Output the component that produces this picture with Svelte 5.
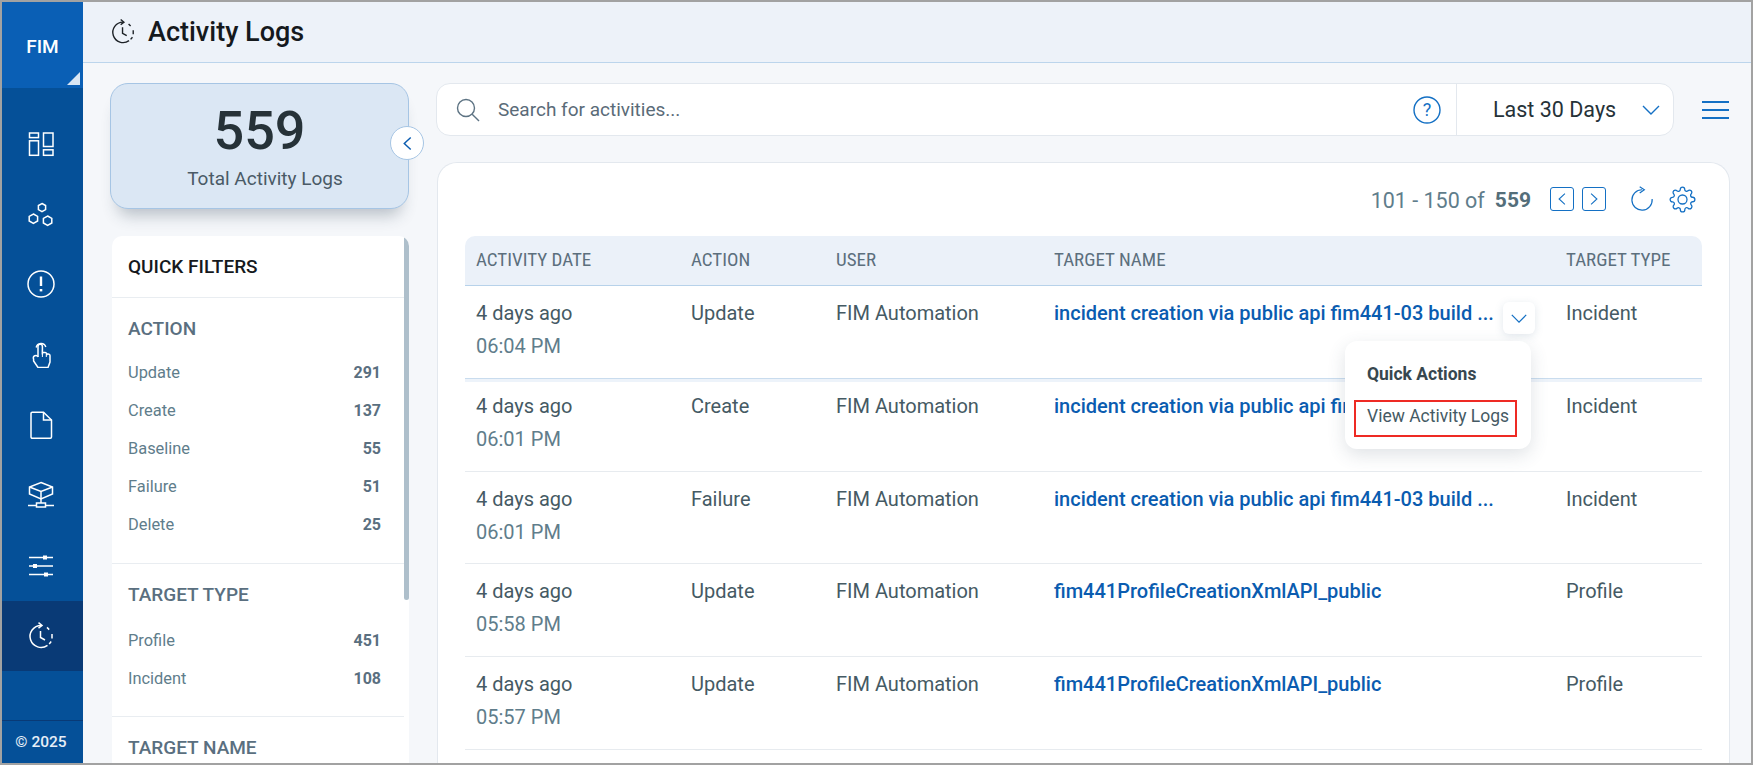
<script>
    const navIcons = ['dash', 'hex', 'alert', 'hand', 'file', 'net', 'sliders', 'clock'];

    const actionFilters = [
        { label: 'Update', count: 291 },
        { label: 'Create', count: 137 },
        { label: 'Baseline', count: 55 },
        { label: 'Failure', count: 51 },
        { label: 'Delete', count: 25 }
    ];
    const typeFilters = [
        { label: 'Profile', count: 451 },
        { label: 'Incident', count: 108 }
    ];

    const longName = 'incident creation via public api fim441-03 build ...';
    const rows = [
        { time: '06:04 PM', action: 'Update', name: longName, type: 'Incident' },
        { time: '06:01 PM', action: 'Create', name: longName, type: 'Incident' },
        { time: '06:01 PM', action: 'Failure', name: longName, type: 'Incident' },
        { time: '05:58 PM', action: 'Update', name: 'fim441ProfileCreationXmlAPI_public', type: 'Profile' },
        { time: '05:57 PM', action: 'Update', name: 'fim441ProfileCreationXmlAPI_public', type: 'Profile' }
    ];
</script>

{#snippet clockIcon()}
    <path d="M14 3.4A11 11 0 1 0 20.5 23.3" />
    <path d="M11.5 0.6L15 3.4L11.5 6.2" />
    <path d="M13.5 9V15.5L18 18" />
    <path d="M20 5.4l2.2 2.2M25 12v4.4M24.2 19.6l-2 2.4" />
{/snippet}

<div class="frame">
    <nav class="sidebar">
        <div class="brand">FIM<span class="corner"></span></div>
        <div class="nav-list">
            {#each navIcons as icon}
                <div class="nav-item" class:active={icon === 'clock'}>
                    <svg viewBox="0 0 28 28" width="28" height="28" fill="none" stroke="#fff" stroke-width="1.5">
                        {#if icon === 'dash'}
                            <rect x="2.5" y="4" width="9" height="4.6" />
                            <rect x="2.5" y="11.8" width="9" height="14.5" />
                            <rect x="16.5" y="4" width="9.5" height="13.5" />
                            <rect x="16.5" y="20.8" width="9.5" height="5.5" />
                        {:else if icon === 'hex'}
                            <polygon points="15,3.5 18.6,5.5 18.6,9.6 15,11.6 11.4,9.6 11.4,5.5" />
                            <polygon points="6.4,14 10.6,16.4 10.6,21 6.4,23.4 2.2,21 2.2,16.4" />
                            <polygon points="20.6,16 24.8,18.4 24.8,23 20.6,25.4 16.4,23 16.4,18.4" />
                        {:else if icon === 'alert'}
                            <circle cx="14" cy="14" r="13" />
                            <path d="M14 6.5V16" stroke-width="2.4" />
                            <path d="M14 19V21.4" stroke-width="2.6" />
                        {:else if icon === 'hand'}
                            <path d="M9.2 7.5a5 5 0 0 1 9.6 -.6" />
                            <path d="M11 17V6.5a2.2 2.2 0 0 1 4.4 0V14.5" />
                            <path d="M15.4 12.5h2.6a1.8 1.8 0 0 1 1.8 1.8v1M19.8 14h1.4a1.8 1.8 0 0 1 1.8 1.8V22l-2 5.5H11L6.6 21V19a2.2 2.2 0 0 1 4.4 -2" />
                            <path d="M15.4 10v7M19.3 14v3" stroke-width="1" />
                        {:else if icon === 'file'}
                            <path d="M4 2.5a1.2 1.2 0 0 1 1.2 -1.2H16.5L24.5 9V26a1.2 1.2 0 0 1 -1.2 1.2H5.2A1.2 1.2 0 0 1 4 26Z" />
                            <path d="M16.5 1.3V9H24.5" />
                        {:else if icon === 'net'}
                            <path d="M14 1.5L25.5 6V13L14 18L2.5 13V6Z" />
                            <path d="M2.5 6L14 10.5L25.5 6M14 10.5V18" />
                            <path d="M14 18V22" />
                            <rect x="9.5" y="22" width="9" height="4" />
                            <path d="M1 24.5H9.5M18.5 24.5H27" />
                        {:else if icon === 'sliders'}
                            <path d="M2 5.5H26M2 14H26M2 22.5H26" />
                            <rect x="16" y="3.5" width="4" height="4" fill="#fff" stroke="none" />
                            <rect x="6" y="12" width="4" height="4" fill="#fff" stroke="none" />
                            <rect x="17" y="20.5" width="4" height="4" fill="#fff" stroke="none" />
                        {:else}
                            {@render clockIcon()}
                        {/if}
                    </svg>
                </div>
            {/each}
        </div>
        <div class="copyright">© 2025</div>
    </nav>

    <div class="main">
        <header class="topbar">
            <svg viewBox="0 0 28 28" width="26" height="26" fill="none" stroke="#1c2126" stroke-width="1.5">
                {@render clockIcon()}
            </svg>
            <h1>Activity Logs</h1>
        </header>

        <div class="content">
            <aside class="left">
                <div class="summary">
                    <div class="big">559</div>
                    <div class="sub">Total Activity Logs</div>
                    <button class="collapse" aria-label="Collapse">
                        <svg viewBox="0 0 12 16" width="11" height="15" fill="none" stroke="#0a5cb0" stroke-width="1.6"><path d="M9.5 1.5L2.5 8L9.5 14.5" /></svg>
                    </button>
                </div>

                <div class="filters">
                    <div class="filters-head">QUICK FILTERS</div>
                    <section class="action-filters">
                        <h2>ACTION</h2>
                        {#each actionFilters as f}
                            <div class="filter-row"><span>{f.label}</span><b>{f.count}</b></div>
                        {/each}
                    </section>
                    <section>
                        <h2>TARGET TYPE</h2>
                        {#each typeFilters as f}
                            <div class="filter-row"><span>{f.label}</span><b>{f.count}</b></div>
                        {/each}
                    </section>
                    <section>
                        <h2>TARGET NAME</h2>
                    </section>
                    <div class="thumb"></div>
                </div>
            </aside>

            <div class="right">
                <div class="search-row">
                    <div class="search">
                        <svg class="search-icon" viewBox="0 0 26 26" width="26" height="26" fill="none" stroke="#5d7383" stroke-width="1.4">
                            <circle cx="11" cy="11" r="8.5" />
                            <path d="M17.2 17.2L24 24" />
                        </svg>
                        <span class="placeholder">Search for activities...</span>
                        <svg class="help" viewBox="0 0 28 28" width="28" height="28" fill="none" stroke="#1470c4" stroke-width="1.4">
                            <circle cx="14" cy="14" r="13" />
                            <text x="14" y="20" text-anchor="middle" class="help-mark">?</text>
                        </svg>
                        <div class="range">
                            <span>Last 30 Days</span>
                            <svg viewBox="0 0 20 12" width="20" height="12" fill="none" stroke="#1470c4" stroke-width="1.4"><path d="M2 2L10 10L18 2" /></svg>
                        </div>
                    </div>
                    <div class="menu" aria-label="Menu"><i></i><i></i><i></i></div>
                </div>

                <div class="card">
                    <div class="pager">
                        <span class="pager-text">101 - 150 of</span>
                        <b class="pager-total">559</b>
                        <span class="page-btns">
                            <span class="page-btn"><svg viewBox="0 0 12 16" width="10" height="14" fill="none" stroke="#1470c4" stroke-width="1.3"><path d="M9.5 1.5L2.5 8L9.5 14.5" /></svg></span>
                            <span class="page-btn"><svg viewBox="0 0 12 16" width="10" height="14" fill="none" stroke="#1470c4" stroke-width="1.3"><path d="M2.5 1.5L9.5 8L2.5 14.5" /></svg></span>
                        </span>
                        <svg class="refresh" viewBox="0 0 26 28" width="24" height="26" fill="none" stroke="#1470c4" stroke-width="1.3">
                            <path d="M24 14A11 11 0 1 1 13 4" />
                            <path d="M10.5 0.8L15.5 4L10.5 7.4" />
                        </svg>
                        <svg class="gear" viewBox="0 0 24 24" width="27" height="27" fill="none" stroke="#1470c4" stroke-width="1.15">
                            <circle cx="12" cy="12" r="4" />
                            <path d="M19.4 15a1.65 1.65 0 0 0 .33 1.82l.06.06a2 2 0 0 1 0 2.83 2 2 0 0 1-2.83 0l-.06-.06a1.65 1.65 0 0 0-1.82-.33 1.65 1.65 0 0 0-1 1.51V21a2 2 0 0 1-2 2 2 2 0 0 1-2-2v-.09A1.65 1.65 0 0 0 9 19.4a1.65 1.65 0 0 0-1.82.33l-.06.06a2 2 0 0 1-2.83 0 2 2 0 0 1 0-2.83l.06-.06a1.65 1.65 0 0 0 .33-1.82 1.65 1.65 0 0 0-1.51-1H3a2 2 0 0 1-2-2 2 2 0 0 1 2-2h.09A1.65 1.65 0 0 0 4.6 9a1.65 1.65 0 0 0-.33-1.82l-.06-.06a2 2 0 0 1 0-2.83 2 2 0 0 1 2.83 0l.06.06a1.65 1.65 0 0 0 1.82.33H9a1.65 1.65 0 0 0 1-1.51V3a2 2 0 0 1 2-2 2 2 0 0 1 2 2v.09a1.65 1.65 0 0 0 1 1.51 1.65 1.65 0 0 0 1.82-.33l.06-.06a2 2 0 0 1 2.83 0 2 2 0 0 1 0 2.83l-.06.06a1.65 1.65 0 0 0-.33 1.82V9a1.65 1.65 0 0 0 1.51 1H21a2 2 0 0 1 2 2 2 2 0 0 1-2 2h-.09a1.65 1.65 0 0 0-1.51 1z" />
                        </svg>
                    </div>

                    <div class="table">
                        <div class="tr head">
                            <div>ACTIVITY DATE</div>
                            <div>ACTION</div>
                            <div>USER</div>
                            <div>TARGET NAME</div>
                            <div>TARGET TYPE</div>
                        </div>
                        {#each rows as row, i}
                            <div class="tr body" class:hovered={i === 0}>
                                <div class="date">4 days ago<small>{row.time}</small></div>
                                <div>{row.action}</div>
                                <div>FIM Automation</div>
                                <div class="link">{row.name}</div>
                                <div>{row.type}</div>
                                {#if i === 0}
                                    <button class="row-toggle" aria-label="Quick actions">
                                        <svg viewBox="0 0 20 12" width="18" height="11" fill="none" stroke="#1470c4" stroke-width="1.4"><path d="M2 2L10 10L18 2" /></svg>
                                    </button>
                                    <div class="popup">
                                        <div class="popup-title">Quick Actions</div>
                                        <div class="popup-item">View Activity Logs</div>
                                    </div>
                                {/if}
                            </div>
                        {/each}
                    </div>
                </div>
            </div>
        </div>
    </div>
</div>

<style>
    :global(body) { margin: 0; font-family: Roboto, "Liberation Sans", sans-serif; }
    .frame { box-sizing: border-box; display: flex; width: 1753px; height: 765px; border: 2px solid #a2a2a2; overflow: hidden; background: #f5f7fa; }

    .sidebar { flex: 0 0 81px; display: flex; flex-direction: column; background: #055098; color: #fff; }
    .brand { position: relative; flex: 0 0 86px; display: flex; align-items: center; justify-content: center; background: #0a5fb5; font-size: 19px; font-weight: 500; padding-top: 2px; box-sizing: border-box; }
    .corner { position: absolute; right: 3px; bottom: 3px; width: 0; height: 0; border-left: 13px solid transparent; border-bottom: 13px solid #d9e6f4; }
    .nav-list { padding-top: 20px; flex: 1; }
    .nav-item { height: 70.4px; display: flex; align-items: center; justify-content: center; padding-right: 3px; box-sizing: border-box; }
    .nav-item.active { background: #093a76; }
    .copyright { flex: 0 0 43px; display: flex; align-items: center; justify-content: center; border-top: 1px solid #093a76; font-size: 15.5px; font-weight: 500; color: #e6eef7; padding-right: 3px; box-sizing: border-box; }

    .main { flex: 1; min-width: 0; display: flex; flex-direction: column; }
    .topbar { flex: 0 0 60px; display: flex; align-items: center; gap: 12px; padding-left: 27px; background: #edf2f9; border-bottom: 1px solid #bcd5ec; }
    h1 { margin: 0; font-size: 27px; font-weight: 500; color: #15191d; }

    .content { flex: 1; min-height: 0; display: grid; grid-template-columns: 299px 1fr; gap: 27px; padding: 20px 22px 0 27px; }

    .left { display: flex; flex-direction: column; gap: 27px; min-height: 0; }
    .summary { position: relative; flex: 0 0 126px; box-sizing: border-box; display: flex; flex-direction: column; align-items: center; background: #dbe7f4; border: 1px solid #a6c5e4; border-radius: 18px; box-shadow: 0 14px 16px -8px rgba(40, 60, 80, 0.3); color: #263238; }
    .big { font-size: 54px; font-weight: 500; line-height: 64px; margin-top: 15px; }
    .sub { font-size: 19px; color: #4a5a66; line-height: 24px; margin: 4px 0 0 11px; }
    .collapse { position: absolute; right: -16px; top: 42px; width: 34px; height: 34px; padding: 0; display: flex; align-items: center; justify-content: center; background: #fff; border: 1px solid #a6c5e4; border-radius: 50%; }

    .filters { position: relative; margin-left: 2px; padding-right: 5px; flex: 1; min-height: 0; overflow: hidden; background: #fff; border-radius: 10px 10px 0 0; }
    .filters-head { height: 62px; box-sizing: border-box; display: flex; align-items: center; padding-left: 16px; font-size: 19px; font-weight: 500; color: #15191d; border-bottom: 1px solid #e9edf1; }
    section { padding: 16px 23px 19px 16px; border-bottom: 1px solid #e9edf1; }
    h2 { margin: 0 0 11px; font-size: 19px; line-height: 30px; font-weight: 500; color: #5a6f80; }
    .action-filters { padding-bottom: 20px; }
    .action-filters h2 { margin-bottom: 9px; }
    .filter-row { height: 38px; display: flex; align-items: center; justify-content: space-between; font-size: 16.4px; color: #607d8b; }
    .filter-row b { font-size: 16px; font-weight: 700; color: #5a6f80; }
    .thumb { position: absolute; right: 0; top: 0; width: 5px; height: 364px; background: #aebfcb; border-radius: 0 0 3px 3px; }

    .right { display: flex; flex-direction: column; gap: 26px; min-width: 0; }
    .search-row { display: flex; align-items: center; gap: 28px; }
    .search { flex: 1; height: 53px; box-sizing: border-box; display: flex; align-items: center; background: #fff; border: 1px solid #e3e8ee; border-radius: 14px; padding-left: 18px; }
    .placeholder { margin-left: 17px; flex: 1; font-size: 19px; color: #5a6b78; }
    .help { margin-right: 15px; }
    .help-mark { font: 400 18px Roboto, sans-serif; fill: #1470c4; stroke: none; }
    .range { height: 100%; width: 217px; box-sizing: border-box; display: flex; align-items: center; justify-content: space-between; padding: 0 12px 0 36px; border-left: 1px solid #e3e8ee; font-size: 21.5px; color: #263238; }
    .menu { flex: 0 0 27px; display: flex; flex-direction: column; gap: 6px; }
    .menu i { display: block; height: 2px; background: #1470c4; }

    .card { flex: 1; min-height: 0; overflow: hidden; box-sizing: border-box; background: #fff; border: 1px solid #e3e8ee; border-bottom: 0; border-radius: 20px 20px 0 0; margin: 0 -1px 0 1px; padding: 0 27px; }
    .pager { height: 73px; display: flex; align-items: center; justify-content: flex-end; padding-bottom: 1px; box-sizing: border-box; }
    .pager-text { font-size: 21.5px; color: #607d8b; margin-top: 2px; }
    .pager-total { font-size: 21px; font-weight: 700; color: #546e7a; margin: 2px 0 0 10px; }
    .page-btns { display: flex; gap: 8px; margin-left: 19px; }
    .page-btn { width: 24px; height: 24px; box-sizing: border-box; display: flex; align-items: center; justify-content: center; border: 1.5px solid #1470c4; border-radius: 3px; }
    .refresh { margin-left: 24px; }
    .gear { margin-left: 15px; margin-right: 6px; }

    .table { display: flex; flex-direction: column; }
    .tr { position: relative; display: grid; grid-template-columns: 215px 145px 218px 512px 147px; }
    .tr > div { padding-left: 11px; box-sizing: border-box; }
    .head { height: 50px; align-items: center; background: #ebf1f9; border-bottom: 1px solid #b7d2ea; border-radius: 10px 10px 0 0; font-size: 19px; color: #5c6f7d; font-family: "Roboto Condensed", "Liberation Sans Narrow", Roboto, sans-serif; font-stretch: condensed; padding-bottom: 2px; box-sizing: border-box; }
    .body { height: 92.8px; padding-top: 11px; box-sizing: border-box; border-bottom: 1px solid #e7ebef; font-size: 20px; line-height: 33px; color: #455a64; }
    .body.hovered { border-bottom: 1px solid #c9dcee; box-shadow: 0 3px 0 #edf3fa; z-index: 1; }
    .date small { display: block; font-size: 20px; color: #607d8b; }
    .link { color: #0a5cb0; font-weight: 500; white-space: nowrap; overflow: hidden; }
    .row-toggle { position: absolute; left: 1038px; top: 16px; width: 32px; height: 32px; padding: 0; display: flex; align-items: center; justify-content: center; background: #fff; border: 0; border-radius: 6px; box-shadow: 0 2px 8px rgba(90, 120, 150, 0.18); }
    .tr > .popup { position: absolute; left: 880px; top: 55px; width: 186px; height: 108px; padding: 17px 9px 0; background: #fff; border-radius: 12px; box-shadow: 0 6px 18px rgba(60, 80, 100, 0.16); z-index: 2; }
    .popup-title { padding-left: 13px; font-size: 17.5px; line-height: 32px; font-weight: 700; color: #37474f; }
    .popup-item { margin-top: 10px; width: 163px; height: 37px; box-sizing: border-box; border: 2px solid #ee2a24; padding-left: 11px; font-size: 17.5px; line-height: 29px; color: #455a64; white-space: nowrap; }
</style>
